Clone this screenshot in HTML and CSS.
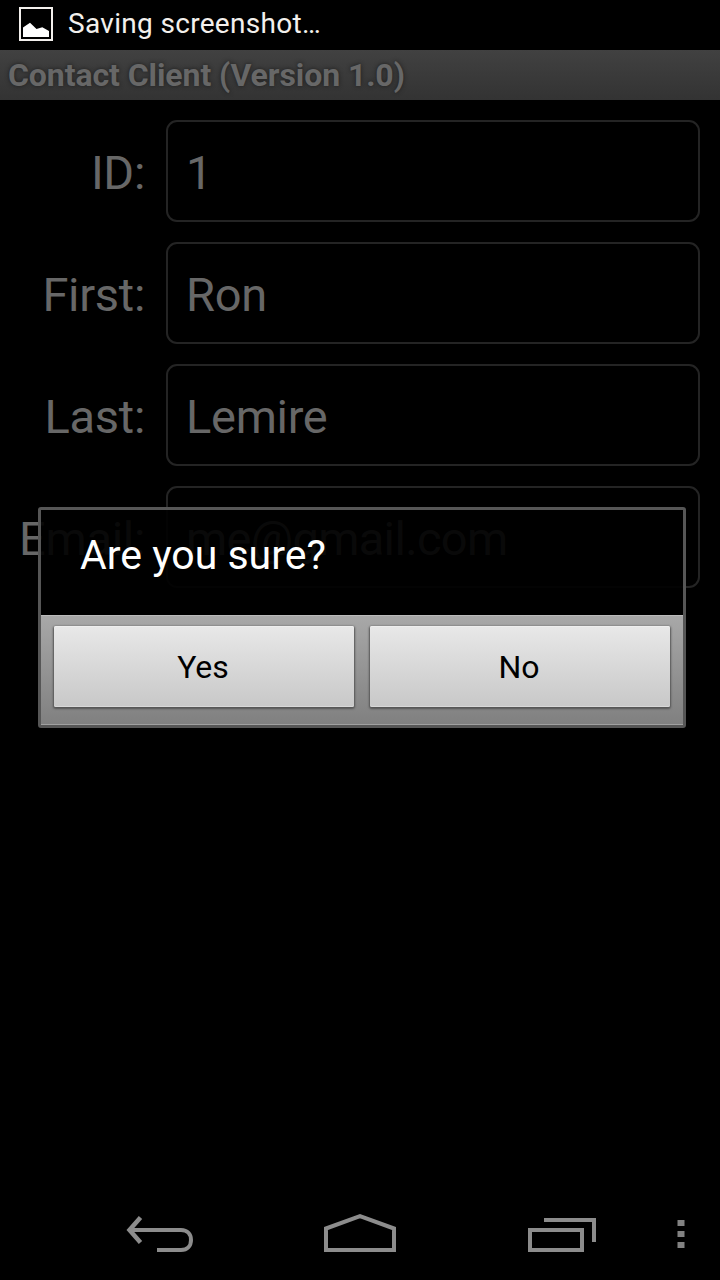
FILE: index.html
```html
<!DOCTYPE html>
<html lang="en">
<head>
<meta charset="utf-8">
<title>Contact Client</title>
<link rel="stylesheet" href="styles.css">
</head>
<body>
<div class="screen">
  <header class="status-bar">
    <svg class="status-icon" width="36" height="36" viewBox="0 0 36 36">
      <rect x="2" y="2" width="32" height="32" fill="none" stroke="#f3f0ed" stroke-width="2"/>
      <path d="M5 31V21.500L12 16.800L18.500 23L24.300 21.300L31 25V31Z" fill="#fff"/>
    </svg>
    <span class="status-text">Saving screenshot…</span>
  </header>
  <h1 class="title-bar"><span>Contact Client (Version 1.0)</span></h1>
  <main class="form">
    <label class="label">ID:</label><div class="field">1</div>
    <label class="label">First:</label><div class="field">Ron</div>
    <label class="label">Last:</label><div class="field">Lemire</div>
    <label class="label">Email:</label><div class="field email">me@gmail.com</div>
  </main>
  <nav class="nav-bar">
    <svg class="nav-icons" width="720" height="96" viewBox="0 1184 720 96" fill="none" stroke="#8c8c8c" stroke-width="4">
      <path d="M140.500 1217.500L129.500 1230L140.500 1242.500" stroke-width="4.500"/>
      <path d="M129 1230H181C187.500 1230 191 1234.500 191 1240S187.500 1250 181 1250H157"/>
      <path d="M326 1250V1228.500L360 1216.200L394 1228.500V1250Z"/>
      <path d="M544 1220H594V1242M530 1230H582V1250H530Z"/>
      <path d="M677.500 1223H684.500M677.500 1234H684.500M677.500 1245H684.500" stroke="#828282" stroke-width="6"/>
    </svg>
  </nav>
  <section class="dialog" role="dialog">
    <div class="dialog-message"><span>Are you sure?</span></div>
    <div class="dialog-actions">
      <button class="button">Yes</button>
      <button class="button">No</button>
    </div>
  </section>
</div>
</body>
</html>
```
FILE: styles.css
```css
* { box-sizing: border-box; }
body { margin: 0; background: #000; font-family: Roboto, sans-serif; }
.screen { position: relative; display: flex; flex-direction: column; width: 720px; height: 1280px; overflow: hidden; background: #000; }
.status-bar { display: flex; align-items: center; height: 50px; padding: 0 18px 2px; gap: 14px; color: #f3f0ed; }
.status-text { font-size: 28px; line-height: 34px; letter-spacing: 0.32px; white-space: nowrap; }
.title-bar { display: flex; align-items: center; height: 50px; margin: 0; padding: 0 8px; background: linear-gradient(#414141, #333); color: #676767; font-size: 32px; line-height: 38px; font-weight: 700; letter-spacing: -0.08px; text-shadow: 0 0 4px #1c1c1c; white-space: nowrap; }
.form { display: grid; grid-template-columns: 145px 534px; grid-auto-rows: 102px; gap: 20px 21px; padding: 20px 0; color: #676767; font-size: 47px; line-height: 56px; letter-spacing: -0.3px; }
.label { display: flex; align-items: center; justify-content: flex-end; padding-top: 4px; }
.field { display: flex; align-items: center; padding: 4px 18px 0; border: 2px solid #242424; border-radius: 11px; }
.email { letter-spacing: -0.65px; }
.nav-bar { height: 96px; margin-top: auto; }
.nav-icons { display: block; }
.dialog { position: absolute; left: 38px; top: 507px; width: 648px; height: 221px; display: flex; flex-direction: column; border: 3px solid #565656; border-radius: 3px; }
.dialog-message { flex: none; height: 105px; padding: 21px 39px; background: rgba(0, 0, 0, 0.91); color: #fff; font-size: 41px; line-height: 48px; }
.dialog-actions { display: flex; flex: none; height: 110px; gap: 16px; padding: 10px 13px 17px; background: linear-gradient(#a8a8a8, #808080); border-top: 1px solid #bbb; border-bottom: 1px solid #a0a0a0; }
.button { flex: 1; height: 81px; border: 0; border-radius: 2px; padding: 0 2px 0 0; background: linear-gradient(#e8e8e8, #c8c8c8); box-shadow: 0 1px 2px 1px #555, inset 0 1px #eee, inset 0 -1px #d8d8d8; color: #000; font: 32px/38px Roboto, sans-serif; }
```
